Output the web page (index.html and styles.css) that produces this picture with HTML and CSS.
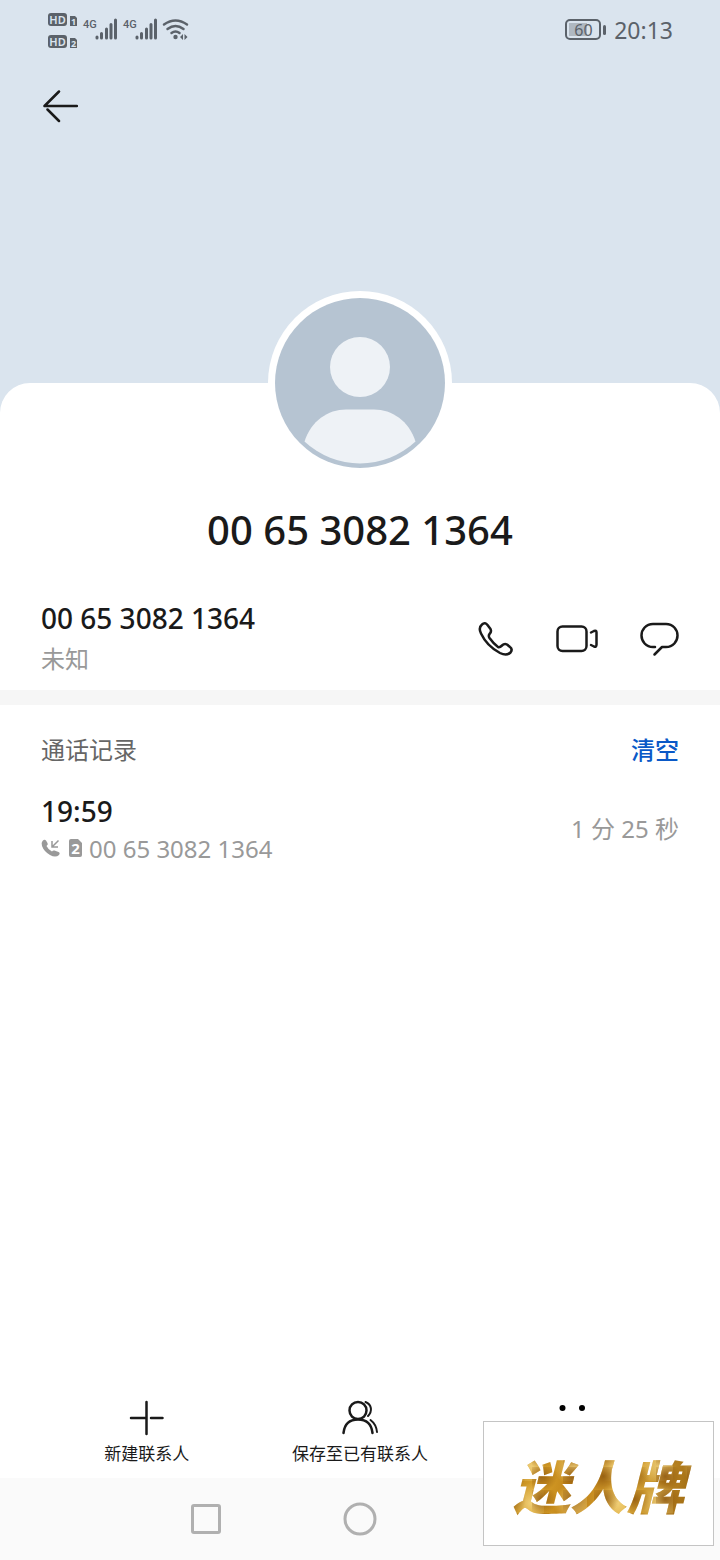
FILE: index.html
```html
<!DOCTYPE html>
<html lang="zh-CN">
  <head>
    <meta charset="UTF-8" />
    <meta name="viewport" content="width=device-width, initial-scale=1.0" />
    <title>00 65 3082 1364</title>
    <link rel="stylesheet" href="styles.css">
  </head>
  <body>
    <header class="hero">
      <div class="status">
        <svg class="status-icons" width="142" height="38" viewBox="0 0 142 38">
          <!-- HD badges -->
          <rect x="0" y="2" width="19" height="13" rx="3" />
          <rect x="0" y="24" width="19" height="13" rx="3" />
          <text class="badge" x="9.500" y="12.500" text-anchor="middle">HD</text>
          <text class="badge" x="9.500" y="34.500" text-anchor="middle">HD</text>
          <path d="M22 5h5l2 2v8h-7zM22 27h5l2 2v8h-7z" />
          <text class="badge-small" x="25.500" y="13.500" text-anchor="middle">1</text>
          <text class="badge-small" x="25.500" y="35.500" text-anchor="middle">2</text>
          <text class="net" x="35" y="17">4G</text>
          <text class="net" x="75" y="17">4G</text>
          <!-- signal bars -->
          <g class="bars">
            <path d="M49 26v1M53.500 22.500v4.500M58.500 18v9M63 13.500v13.500M67.500 9v18" />
            <path d="M89 26v1M93.500 22.500v4.500M98.500 18v9M103 13.500v13.500M107.500 9v18" />
          </g>
          <!-- wifi -->
          <g class="wifi">
            <path d="M116 13.500Q127.500 5.500 139 13.500M119.500 18Q127.500 12 135.500 18M123.500 22Q127.500 19 131.500 22" />
          </g>
          <circle cx="127.500" cy="26" r="2.200" />
          <path d="M132 26l3-3v6zM136.500 23l3 3-3 3z" />
        </svg>
        <div class="status-right">
          <svg width="41" height="24" viewBox="0 0 41 24">
            <rect class="battery" x="1" y="2" width="34" height="19" rx="4" />
            <rect class="battery-fill" x="4" y="5" width="18" height="13" />
            <rect x="38" y="7" width="3" height="10" rx="1.500" />
            <text class="battery-text" x="18.500" y="17.500" text-anchor="middle">60</text>
          </svg>
          <span>20:13</span>
        </div>
      </div>
      <button class="back" aria-label="返回">
        <svg width="36" height="34" viewBox="0 0 36 34">
          <path class="line" d="M17 2.500L2.500 17h32.500M5.500 20.500L17 32" />
        </svg>
      </button>
    </header>

    <main class="sheet">
      <svg class="avatar" viewBox="0 0 184 184">
        <circle cx="92" cy="92" r="92" fill="#fff" />
        <circle cx="92" cy="92" r="85" fill="#b6c4d2" />
        <circle cx="92" cy="76" r="30" fill="#eef2f6" />
        <path d="M36.500 150.500C43 130 60 118.500 78 118.500h28c18 0 35 11.500 41.500 32a81 81 0 0 1-111 0z" fill="#eef2f6" />
      </svg>
      <h1>00 65 3082 1364</h1>

      <section class="number">
        <div>
          <div class="primary">00 65 3082 1364</div>
          <div class="place">未知</div>
        </div>
        <div class="number-actions">
          <button aria-label="拨打电话">
            <svg width="44" height="44" viewBox="0 0 44 44">
              <path class="line" d="M9 7.500C11 5.500 13 6 14.500 8L17.500 12C18.500 14 18 15.500 16.500 17C15.500 18.500 15.500 19.500 16.500 21C19 24.500 21.500 27.500 25 30C26.500 30.500 27.500 30 29 28.500C30.500 27 32 26.500 34 27.500L37 30C39 31.500 39 33.500 37.500 35.500C34.500 38.500 31 38 27 36C18.500 31.500 12 25 8 16.500C6 12.500 6 10 9 7.500z" />
            </svg>
          </button>
          <button aria-label="视频通话">
            <svg width="44" height="44" viewBox="0 0 44 44">
              <rect class="line" x="2.500" y="9.500" width="29" height="24.500" rx="5" />
              <path class="line" d="M36 15.500l3-1.500q2.500-1 2.500 1.500v12q0 3-2.500 2L36 28" />
            </svg>
          </button>
          <button aria-label="发送信息">
            <svg width="44" height="44" viewBox="0 0 44 44">
              <path class="line" d="M18 30h-2C9 30 4.500 24.500 4.500 18.500S9 7 16 7h13c7 0 11.500 5.500 11.500 11.500S36 30 29 30h-4l-7.500 7.500" />
            </svg>
          </button>
        </div>
      </section>

      <section class="log">
        <div class="log-head">
          <h2>通话记录</h2>
          <button class="clear">清空</button>
        </div>
        <div class="record">
          <div>
            <div class="primary">19:59</div>
            <div class="record-number">
              <svg width="42" height="22" viewBox="0 0 42 22">
                <path d="M1.500 3Q3.500 1 5 2.500l1.500 2.500Q7.500 6.500 5.500 8Q7.500 12 11 13.500Q12 12 13.500 12.500l4 1.500Q19.500 15 18 17Q14.500 20 9 17Q3 13.500 1 8Q0 4.500 1.500 3z" />
                <path class="arrow" d="M17.500 2.500L11.500 8.500M11 3v6h6" />
                <path d="M30 1h7l4 4v12q0 2-2 2h-9q-2 0-2-2V3q0-2 2-2z" />
                <text class="sim" x="34.500" y="15.500" text-anchor="middle">2</text>
              </svg>
              <span>00 65 3082 1364</span>
            </div>
          </div>
          <div class="duration">1 分 25 秒</div>
        </div>
      </section>
    </main>

    <div class="actions">
      <button>
        <svg width="40" height="40" viewBox="0 0 40 40">
          <path class="line" d="M19.500 4v32M4 20h15M24 20h11.500" />
        </svg>
        新建联系人
      </button>
      <button>
        <svg width="40" height="40" viewBox="0 0 40 40">
          <circle class="line" cx="18" cy="12.500" r="8.500" />
          <path class="line" d="M3.500 35C4.500 26 10 21.500 18 21.500S31.500 26 32.500 35" />
          <path class="line thin" d="M25.500 4C32 6.500 32.500 13.500 28 18M30.500 22C34.500 25 36.500 29 37 34" />
        </svg>
        保存至已有联系人
      </button>
      <button aria-label="更多">
        <svg width="40" height="40" viewBox="0 0 40 40">
          <circle cx="9.500" cy="10" r="3" />
          <circle cx="29" cy="10" r="3" />
          <circle cx="9.500" cy="29.500" r="3" />
          <circle cx="29" cy="29.500" r="3" />
        </svg>
      </button>
    </div>

    <nav class="navbar">
      <button aria-label="最近任务">
        <svg width="34" height="34" viewBox="0 0 34 34">
          <rect x="3.500" y="3.500" width="27" height="27" rx="1.500" />
        </svg>
      </button>
      <button aria-label="主屏幕">
        <svg width="34" height="34" viewBox="0 0 34 34">
          <circle cx="17" cy="17" r="15" />
        </svg>
      </button>
      <button aria-label="返回">
        <svg width="34" height="34" viewBox="0 0 34 34">
          <path d="M27 3v28L4 17z" />
        </svg>
      </button>
    </nav>

    <div class="brand"><span>迷人牌</span></div>
  </body>
</html>
```

FILE: styles.css
```css
* {
  box-sizing: border-box;
}
body {
  margin: 0;
  min-height: 100vh;
  display: flex;
  flex-direction: column;
  position: relative;
  font-family: "Noto Sans", "Noto Sans CJK SC", sans-serif;
  color: #1a1a1a;
  background: #dae4ee;
}
button {
  padding: 0;
  border: 0;
  background: none;
  font: inherit;
  color: inherit;
}
svg {
  display: block;
  flex: none;
}
h1,
h2 {
  margin: 0;
}
.line {
  fill: none;
  stroke: #1a1a1a;
  stroke-width: 2.5;
  stroke-linecap: round;
  stroke-linejoin: round;
}
.thin {
  stroke-width: 2;
}

/* top area */
.hero {
  height: 383px;
}
.status {
  display: flex;
  justify-content: space-between;
  align-items: center;
  height: 60px;
  padding: 0 47px 0 48px;
  color: #5b626a;
}
.status svg {
  fill: #5b626a;
}
.status .badge {
  font-size: 11px;
  font-weight: 600;
  fill: #dae4ee;
}
.status .badge-small {
  font-size: 9px;
  font-weight: 700;
  fill: #dae4ee;
}
.status .net {
  font-family: Roboto, sans-serif;
  font-size: 11px;
  font-weight: 500;
}
.bars,
.wifi {
  fill: none;
  stroke: #5b626a;
  stroke-width: 3;
  stroke-linecap: round;
}
.wifi {
  stroke-width: 2.5;
}
.status-right {
  display: flex;
  align-items: center;
  gap: 8px;
  font-size: 23px;
}
.status .battery {
  fill: none;
  stroke: #5b626a;
  stroke-width: 2;
}
.status .battery-fill {
  fill: #afb8c1;
}
.status .battery-text {
  font-size: 16px;
}
.back {
  display: block;
  margin: 29px 42px;
}

/* contact */
.sheet {
  flex: 1;
  border-radius: 30px 30px 0 0;
  background: #fff;
}
.avatar {
  width: 184px;
  height: 184px;
  margin: -92px auto 0;
}
h1 {
  margin-top: 27px;
  font-size: 40px;
  font-weight: 500;
  line-height: 56px;
  text-align: center;
}
.number {
  display: flex;
  justify-content: space-between;
  align-items: center;
  padding: 40px 39px 10px 41px;
  border-bottom: 15px solid #f6f6f6;
}
.primary {
  font-size: 28px;
  font-weight: 500;
  line-height: 40px;
}
.place {
  font-size: 24px;
  line-height: 42px;
  color: #999;
}
.number-actions {
  display: flex;
  gap: 38px;
}

/* call log */
.log {
  padding: 21px 41px;
}
.log-head {
  display: flex;
  justify-content: space-between;
  font-size: 24px;
  line-height: 48px;
}
h2 {
  font-size: 24px;
  font-weight: 400;
  color: #666;
}
.clear {
  font-weight: 500;
  color: #0a59c7;
}
.record {
  display: flex;
  justify-content: space-between;
  align-items: center;
  margin-top: 17px;
  font-size: 24px;
  line-height: 36px;
  color: #999;
}
.record .primary {
  color: #1a1a1a;
}
.record-number {
  display: flex;
  align-items: center;
  gap: 6px;
}
.record-number svg {
  fill: #999;
}
.arrow {
  fill: none;
  stroke: #999;
  stroke-width: 1.5;
}
.record-number .sim {
  font-size: 15px;
  font-weight: 700;
  fill: #fff;
}

/* bottom toolbar */
.actions {
  display: grid;
  grid-template-columns: repeat(3, 1fr);
  padding: 0 40px 12px;
  background: #fff;
}
.actions button {
  display: flex;
  flex-direction: column;
  align-items: center;
  gap: 4px;
  font-size: 17px;
  line-height: 24px;
}
.navbar {
  display: flex;
  justify-content: center;
  align-items: center;
  gap: 120px;
  height: 82px;
  background: #fafafa;
}
.navbar svg {
  fill: none;
  stroke: #b0b0b0;
  stroke-width: 3;
}

/* brand label over the corner */
.brand {
  position: absolute;
  right: 6px;
  bottom: 14px;
  display: flex;
  justify-content: center;
  align-items: center;
  width: 231px;
  height: 125px;
  border: 1px solid #c4c4c4;
  background: #fff;
}
.brand span {
  padding: 0 12px;
  font-family: "Noto Sans CJK SC", sans-serif;
  font-size: 57px;
  font-weight: 900;
  font-style: italic;
  line-height: 80px;
  color: transparent;
  background:
    radial-gradient(circle at 30% 40%, #8a520acc 0, transparent 60%) 0 0 / 31px 23px,
    radial-gradient(circle at 70% 60%, #f6da8acc 0, transparent 55%) 0 0 / 43px 37px,
    linear-gradient(100deg, #a8700f, #d9a32c 20%, #bd7f15 40%, #e0ae3c 65%, #96600c);
  background-clip: text;
  -webkit-background-clip: text;
}
```
